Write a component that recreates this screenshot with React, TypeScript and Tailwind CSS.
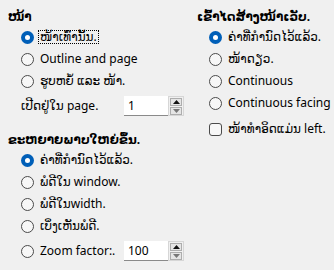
import React from 'react'

const font = { fontFamily: '"Noto Sans", "DejaVu Sans", sans-serif' }

function Radio({ label, checked = false, focus = false }: { label: string; checked?: boolean; focus?: boolean }) {
  return (
    <div className="flex h-[22px] items-center gap-[4px]">
      {checked ? (
        <span className="flex h-[13px] w-[13px] shrink-0 items-center justify-center rounded-full bg-[#005fb8]">
          <span className="h-[5px] w-[5px] rounded-full bg-white" />
        </span>
      ) : (
        <span className="h-[13px] w-[13px] shrink-0 rounded-full border border-[#4a4a4a] bg-[#f7f7f7]" />
      )}
      <span
        className={
          focus
            ? 'whitespace-nowrap border border-dotted border-black px-[1px] leading-[12px]'
            : 'whitespace-nowrap px-[2px] leading-[12px]'
        }
      >
        {label}
      </span>
    </div>
  )
}

function Spin({ value }: { value: string }) {
  return (
    <div className="flex h-[20px] w-[60px] items-stretch">
      <div className="flex flex-1 items-center border-b border-[#8a8a8a] bg-white pl-[4px]">{value}</div>
      <div className="flex w-[16px] flex-col justify-center gap-[1px] border border-[#d6d6d6] bg-[#f0f0f0] px-[1px]">
        <div className="flex h-[8px] items-center justify-center border border-[#adadad] bg-[#e5e5e5]">
          <svg width="7" height="4" viewBox="0 0 7 4">
            <path d="M0 4 L3.5 0 L7 4 Z" fill="#111" />
          </svg>
        </div>
        <div className="flex h-[8px] items-center justify-center border border-[#adadad] bg-[#e5e5e5]">
          <svg width="7" height="4" viewBox="0 0 7 4">
            <path d="M0 0 L3.5 4 L7 0 Z" fill="#777" />
          </svg>
        </div>
      </div>
    </div>
  )
}

export default function App() {
  return (
    <div className="flex h-[270px] w-[334px] bg-[#f0f0f0] pl-[8px] pt-[8px] text-[12px] text-black" style={font}>
      <div className="flex w-[189px] flex-col">
        <div className="flex h-[18px] items-center font-bold">ໜ້າ</div>
        <div className="flex flex-col pl-[13px]">
          <Radio label="ໜ້າເທົ່ານັ້ນ." checked focus />
          <Radio label="Outline and page" />
          <Radio label="ຮູບຫຍໍ້ ແລະ ໜ້າ." />
          <div className="mt-[3px] flex h-[22px] items-center">
            <span className="w-[103px] whitespace-nowrap">ເປີດຢູ່ໃນ page.</span>
            <Spin value="1" />
          </div>
        </div>
        <div className="mt-[14px] flex h-[18px] items-center font-bold">ຂະຫຍາຍພາບໃຫຍ່ຂຶ້ນ.</div>
        <div className="flex flex-col pl-[13px]">
          <Radio label="ຄ່າທີ່ກຳນົດໄວ້ແລ້ວ." checked />
          <Radio label="ພໍດີໃນ window." />
          <Radio label="ພໍດີໃນwidth." />
          <Radio label="ເບິ່ງເຫັນພໍດີ." />
          <div className="mt-[3px] flex h-[22px] items-center">
            <div className="w-[103px]">
              <Radio label="Zoom factor:." />
            </div>
            <Spin value="100" />
          </div>
        </div>
      </div>
      <div className="flex flex-col">
        <div className="flex h-[18px] items-center font-bold">ເຂົ້າໄດສ້າງໜ້າເວັບ.</div>
        <div className="flex flex-col pl-[12px]">
          <Radio label="ຄ່າທີ່ກຳນົດໄວ້ແລ້ວ." checked />
          <Radio label="ໜ້າດຽວ." />
          <Radio label="Continuous" />
          <Radio label="Continuous facing" />
          <div className="mt-[4px] flex h-[22px] items-center gap-[4px]">
            <span className="h-[13px] w-[13px] shrink-0 rounded-[3px] border border-[#4a4a4a] bg-[#f7f7f7]" />
            <span className="whitespace-nowrap px-[2px]">ໜ້າທຳອິດແມ່ນ left.</span>
          </div>
        </div>
      </div>
    </div>
  )
}
